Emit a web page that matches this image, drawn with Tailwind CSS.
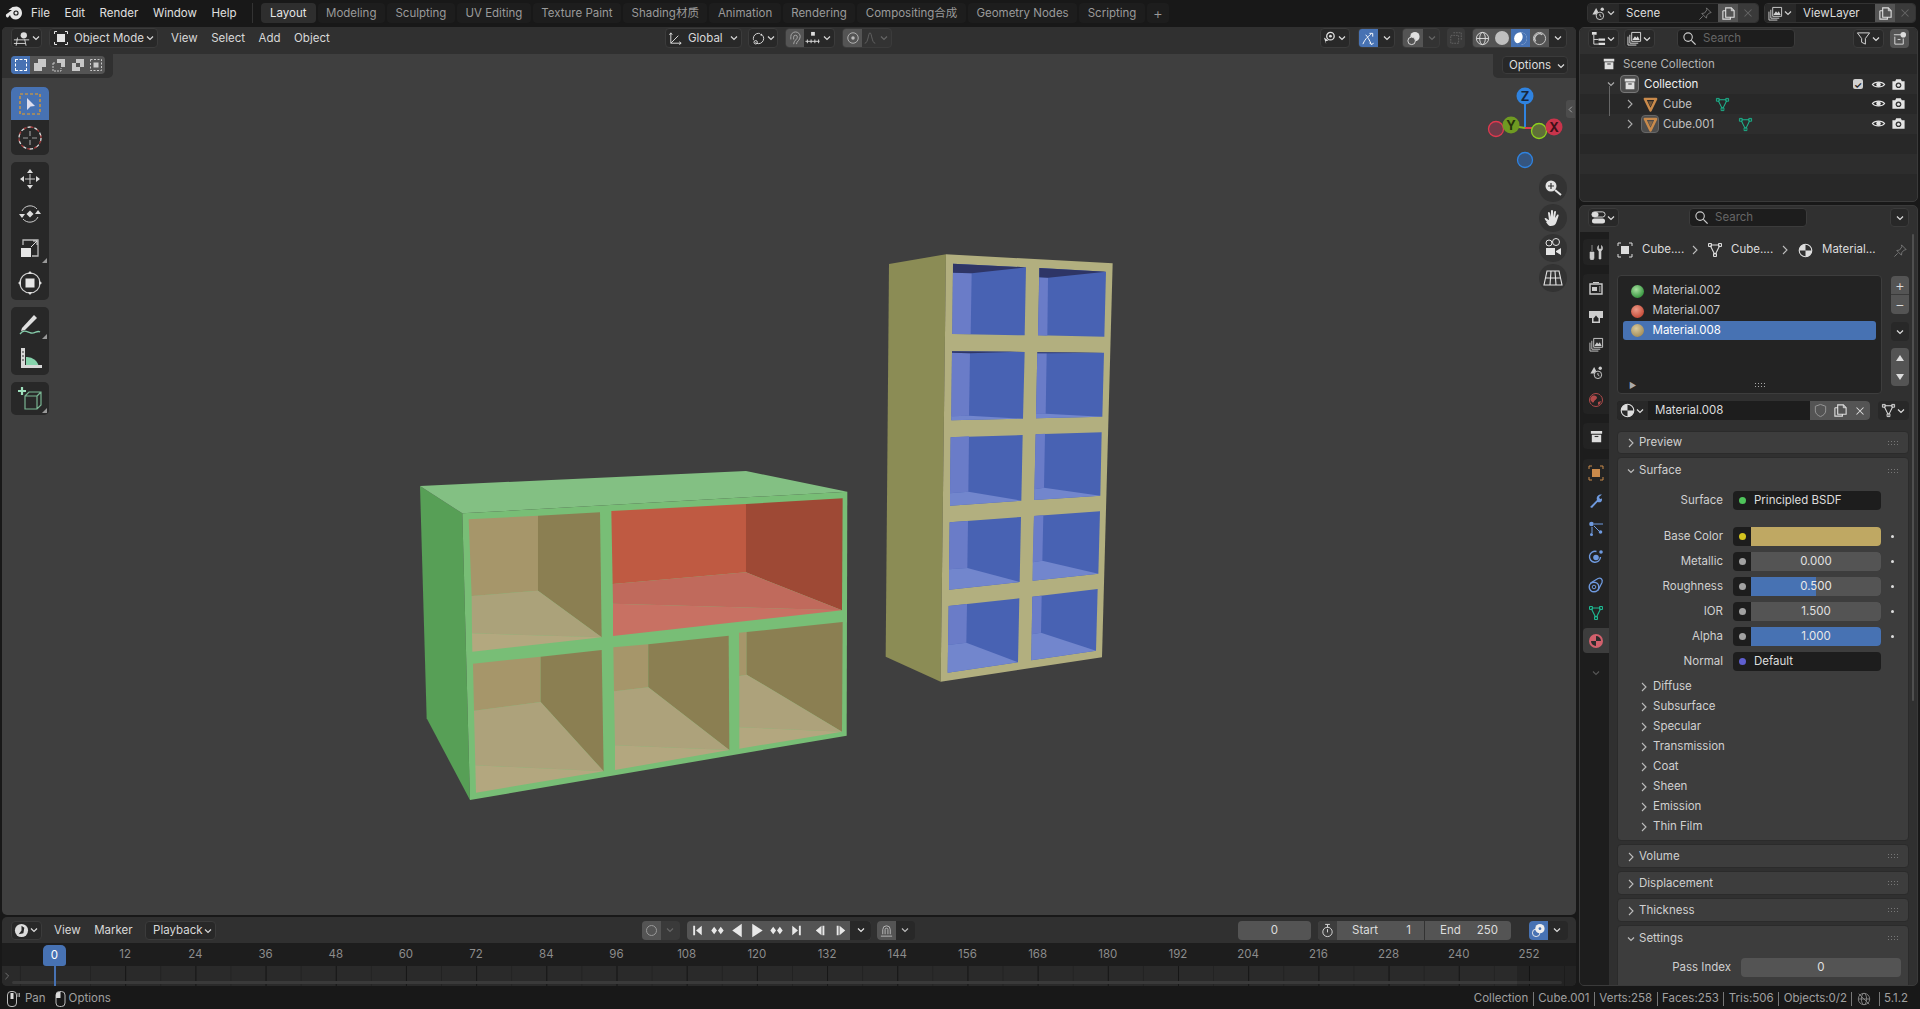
<!DOCTYPE html>
<html lang="en">
<head>
<meta charset="UTF-8">
<title>Blender</title>
<script src="https://cdn.jsdelivr.net/npm/@tailwindcss/browser@4"></script>
</head>
<body class="h-[1009px] w-[1920px] overflow-hidden bg-[#181818] text-[11.500px] leading-none whitespace-nowrap text-[#d4d4d4] font-['Inter','Noto_Sans_CJK_SC',sans-serif]">

<!-- shared icons -->
<svg width="0" height="0" class="absolute">
  <symbol id="chevd" viewBox="0 0 10 10"><path d="M2 3.500l3 3 3-3" fill="none" stroke="currentColor" stroke-width="1.200"/></symbol>
  <symbol id="chevr" viewBox="0 0 10 10"><path d="M3 1l4 4-4 4" fill="none" stroke="currentColor" stroke-width="1.100"/></symbol>
  <symbol id="tri" viewBox="0 0 16 16"><path d="M3 3H13L8 13Z" fill="none" stroke="currentColor" stroke-width="1.100"/><path d="M1.500 1.500h3v3h-3zM11.500 1.500h3v3h-3zM6.500 11.500h3v3h-3z" fill="#00000055" stroke="currentColor"/></symbol>
  <symbol id="eye" viewBox="0 0 16 16"><path d="M1.500 8C4 4.500 12 4.500 14.500 8 12 11.500 4 11.500 1.500 8Z" fill="none" stroke="currentColor" stroke-width="1.300"/><circle cx="8" cy="8" r="2.400" fill="currentColor"/></symbol>
  <symbol id="cam" viewBox="0 0 16 16"><path d="M1.500 4.500h3l1-2h5l1 2h3v9h-13z" fill="currentColor"/><circle cx="8" cy="8.800" r="3" fill="#333"/><circle cx="8" cy="8.800" r="1.600" fill="currentColor"/></symbol>
  <symbol id="box" viewBox="0 0 16 16"><path d="M2 2h12v3H2zM3 6h10v8H3z" fill="currentColor"/><path d="M6 8h4" stroke="#333" stroke-width="1.200"/></symbol>
  <symbol id="obj" viewBox="0 0 16 16"><path d="M2 2h12L8 14.500Z" fill="none" stroke="#c98a4b" stroke-width="2.600" stroke-linejoin="round"/><path d="M5.500 4.500h5L8 10z" fill="#c98a4b" opacity=".45"/></symbol>
  <symbol id="dup" viewBox="0 0 16 16"><path d="M5 2h6l3 3v7H5z M2 5h3 M2 5v9h8v-2" fill="none" stroke="currentColor" stroke-width="1.200"/><path d="M11 2v3h3" fill="none" stroke="currentColor"/></symbol>
  <symbol id="x" viewBox="0 0 16 16"><path d="M4 4l8 8M12 4l-8 8" stroke="currentColor" stroke-width="1.200"/></symbol>
  <symbol id="pin" viewBox="0 0 16 16"><path d="M9 2l5 5-2 .5-2.500 2.500-.5 3-5-5 3-.5L9.500 4zM5 11l-3.500 3.500" fill="none" stroke="currentColor"/></symbol>
  <symbol id="search" viewBox="0 0 16 16"><circle cx="6.500" cy="6.500" r="4.500" fill="none" stroke="currentColor" stroke-width="1.200"/><path d="M10 10l4.500 4.500" stroke="currentColor" stroke-width="1.400"/></symbol>
  <symbol id="mat" viewBox="0 0 16 16"><circle cx="8" cy="8" r="6.700" fill="none" stroke="currentColor" stroke-width="1.200"/><path d="M8 1.300A6.700 6.700 0 0 0 1.300 8H8zM8 8H14.700A6.700 6.700 0 0 1 8 14.700z" fill="currentColor"/></symbol>
  <symbol id="scene" viewBox="0 0 16 16"><path d="M5.500 2L9 9H1.500z" fill="currentColor"/><circle cx="12" cy="3.500" r="1.800" fill="currentColor"/><circle cx="9.500" cy="10.500" r="4" fill="#2a2a2a" stroke="currentColor"/><path d="M9.500 8.500v2l1.500 1" stroke="currentColor" fill="none"/></symbol>
  <symbol id="layers" viewBox="0 0 16 16"><path d="M5 1.500h9.500V11H5z" fill="#2a2a2a" stroke="currentColor"/><path d="M6 9l2.500-3.500L10 7.500 11.500 5.500 13.500 9.500H6z" fill="currentColor"/><path d="M3 4v9h9M1 6v9h9" fill="none" stroke="currentColor"/></symbol>
  <symbol id="grip" viewBox="0 0 11 5"><path d="M0 0h1v1H0zM3 0h1v1H3zM6 0h1v1H6zM9 0h1v1H9zM0 3h1v1H0zM3 3h1v1H3zM6 3h1v1H6zM9 3h1v1H9z" fill="currentColor"/></symbol>
  <symbol id="view3d" viewBox="0 0 20 16"><circle cx="12" cy="4.500" r="3.500" fill="currentColor"/><path d="M1 9.500h17M1 13.500h13M5 7l-1.500 9M13 9l1.500 7" stroke="currentColor" fill="none"/></symbol>
</svg>

<!-- top bar -->
<header class="flex h-[27px] items-center pb-[1px]">
  <svg class="ml-[5px] h-[16px] w-[18px] text-[#e8e8e8]" viewBox="0 0 18 16"><path d="M1 9.500l6-4.500H3.500L7.500 2l4-.5c3 .3 5.500 3 5.500 6.500s-3 6.500-6 6.500c-3.500 0-5.500-2-6-4.500L3 12.500C1.500 13 .5 11 1 9.500Z" fill="currentColor"/><circle cx="11" cy="8" r="2.600" fill="#181818"/><circle cx="11" cy="8" r="1.500" fill="currentColor"/></svg>
  <nav class="ml-[8px] flex w-[207px] gap-[14.500px] pt-[1px] text-[#e0e0e0]"><span>File</span><span>Edit</span><span>Render</span><span>Window</span><span>Help</span></nav>
  <div class="ml-[14px] h-[20px] w-px bg-[#333]"></div>
  <div class="ml-[8px] flex h-[20px] items-stretch gap-[2px] text-[#9a9a9a]">
    <span class="flex items-center rounded-[4px] bg-[#2e2e2e] px-[9px] pt-[1px] text-[#e6e6e6]">Layout</span>
    <span class="flex items-center rounded-[4px] bg-[#1d1d1d] px-[8.500px] pt-[1px]">Modeling</span>
    <span class="flex items-center rounded-[4px] bg-[#1d1d1d] px-[8.500px] pt-[1px]">Sculpting</span>
    <span class="flex items-center rounded-[4px] bg-[#1d1d1d] px-[8.500px] pt-[1px]">UV Editing</span>
    <span class="flex items-center rounded-[4px] bg-[#1d1d1d] px-[8.500px] pt-[1px]">Texture Paint</span>
    <span class="flex items-center rounded-[4px] bg-[#1d1d1d] px-[8.500px] pt-[1px]">Shading材质</span>
    <span class="flex items-center rounded-[4px] bg-[#1d1d1d] px-[8.500px] pt-[1px]">Animation</span>
    <span class="flex items-center rounded-[4px] bg-[#1d1d1d] px-[8.500px] pt-[1px]">Rendering</span>
    <span class="flex items-center rounded-[4px] bg-[#1d1d1d] px-[8.500px] pt-[1px]">Compositing合成</span>
    <span class="flex items-center rounded-[4px] bg-[#1d1d1d] px-[8.500px] pt-[1px]">Geometry Nodes</span>
    <span class="flex items-center rounded-[4px] bg-[#1d1d1d] px-[8.500px] pt-[1px]">Scripting</span>
    <span class="flex items-center rounded-[4px] bg-[#1d1d1d] px-[6px] text-[15px] font-light">+</span>
  </div>
  <div class="ml-auto mr-[4px] flex gap-[5px]">
    <div class="flex h-[20px] w-[172px] items-center overflow-hidden rounded-[4px] border border-[#333] bg-[#1d1d1d]">
      <div class="flex h-full w-[31px] items-center justify-center bg-[#282828] text-[#d0d0d0]"><svg class="h-[15px] w-[15px]"><use href="#scene"/></svg><svg class="h-[10px] w-[10px]"><use href="#chevd"/></svg></div>
      <span class="ml-[7px] pt-[1px] text-[#ddd]">Scene</span>
      <svg class="ml-auto mr-[5px] h-[15px] w-[15px] text-[#777]"><use href="#pin"/></svg>
      <div class="flex h-full w-[20px] items-center justify-center bg-[#545454] text-[#ddd]"><svg class="h-[15px] w-[15px]"><use href="#dup"/></svg></div>
      <div class="flex h-full w-[20px] items-center justify-center bg-[#3a3a3a] text-[#666]"><svg class="h-[14px] w-[14px]"><use href="#x"/></svg></div>
    </div>
    <div class="flex h-[20px] w-[152px] items-center overflow-hidden rounded-[4px] border border-[#333] bg-[#1d1d1d]">
      <div class="flex h-full w-[31px] items-center justify-center bg-[#282828] text-[#d0d0d0]"><svg class="h-[15px] w-[15px]"><use href="#layers"/></svg><svg class="h-[10px] w-[10px]"><use href="#chevd"/></svg></div>
      <span class="ml-[7px] pt-[1px] text-[#ddd]">ViewLayer</span>
      <div class="ml-auto flex h-full w-[20px] items-center justify-center bg-[#545454] text-[#ddd]"><svg class="h-[15px] w-[15px]"><use href="#dup"/></svg></div>
      <div class="flex h-full w-[20px] items-center justify-center bg-[#3a3a3a] text-[#666]"><svg class="h-[14px] w-[14px]"><use href="#x"/></svg></div>
    </div>
  </div>
</header>

<div class="flex h-[959px]">
  <!-- left column -->
  <div class="ml-[2px] flex w-[1574px] flex-col gap-[2px]">

    <!-- 3D viewport -->
    <section class="relative h-[888px] overflow-hidden rounded-[5px] bg-[#3f3f3f]">
      <svg class="absolute left-0 top-0 h-[888px] w-[1574px]" viewBox="2 27 1574 888">
        <!-- green shelf -->
        <g transform="translate(400 450) scale(.33333)">
          <polygon points="60,108 187,190 210,1050 80,805" fill="#579f56"/>
          <polygon points="60,108 1038,63 1342,125 187,190" fill="#83c083"/>
          <polygon points="187,190 1342,125 1340,857 210,1050" fill="#78be76"/>
          <polygon points="206,208 414,197 414,422 215,438" fill="#a6966a"/>
          <polygon points="414,197 600,187 605,562 414,422" fill="#8b7f52"/>
          <polygon points="215,438 414,422 605,562 216,550" fill="#aba27a"/>
          <polygon points="216,550 605,562 217,605" fill="#b3a87f"/>
          <polygon points="634,183 1038,162 1038,367 638,402" fill="#bf5a42"/>
          <polygon points="1038,162 1328,145 1326,481 1038,367" fill="#9e4935"/>
          <polygon points="638,402 1038,367 1326,481 639,461" fill="#c06a5c"/>
          <polygon points="639,461 1326,481 639,558" fill="#c87163"/>
          <polygon points="219,641 422,620 422,756 222,782" fill="#a6966a"/>
          <polygon points="422,620 605,600 611,964 422,756" fill="#8b7f52"/>
          <polygon points="222,782 422,756 611,964 226,946" fill="#ada27b"/>
          <polygon points="226,946 611,964 228,1028" fill="#b3a77f"/>
          <polygon points="640,592 745,583 745,712 642,724" fill="#a6966a"/>
          <polygon points="745,583 986,557 988,900 745,712" fill="#8b7f52"/>
          <polygon points="642,724 745,712 988,900 645,886" fill="#ada27b"/>
          <polygon points="645,886 988,900 645,960" fill="#b3a77f"/>
          <polygon points="1017,548 1040,546 1040,674 1018,678" fill="#a6966a"/>
          <polygon points="1040,546 1328,516 1326,845 1040,674" fill="#8b7f52"/>
          <polygon points="1018,678 1040,674 1326,845 1018,832" fill="#ada27b"/>
          <polygon points="1018,832 1326,845 1018,896" fill="#b3a77f"/>
        </g>
        <!-- yellow shelf -->
        <g transform="translate(870 240) scale(.33333)">
          <polygon points="57,72 228,43 212,1325 47,1250" fill="#8b8c55"/>
          <polygon points="228,43 728,70 696,1252 212,1325" fill="#b2af7f"/>
          <g fill="#4862b3">
            <polygon points="249,71 468,82 464,286 247,282"/>
            <polygon points="508,84 708,95 703,290 504,286"/>
            <polygon points="246,334 464,335 459,536 244,541"/>
            <polygon points="502,337 702,338 697,530 498,535"/>
            <polygon points="242,592 458,585 454,782 240,797"/>
            <polygon points="497,583 695,577 691,767 493,780"/>
            <polygon points="239,847 453,831 449,1026 237,1049"/>
            <polygon points="492,828 690,814 685,1001 488,1022"/>
            <polygon points="236,1098 448,1075 444,1267 233,1298"/>
            <polygon points="487,1070 683,1047 678,1232 484,1261"/>
          </g>
          <g fill="#6a7cc8">
            <polygon points="249,98 305,100 302,282 247,282"/>
            <polygon points="508,112 534,113 532,287 504,286"/>
            <polygon points="246,338 300,340 297,527 244,529"/>
            <polygon points="502,340 530,340 527,521 498,522"/>
            <polygon points="242,592 297,589 295,755 240,760"/>
            <polygon points="497,583 525,581 522,743 493,748"/>
            <polygon points="239,847 294,843 292,984 237,988"/>
            <polygon points="492,828 520,826 517,962 488,967"/>
            <polygon points="236,1098 291,1092 289,1208 234,1215"/>
            <polygon points="487,1070 515,1067 513,1178 485,1183"/>
          </g>
          <g fill="#2e3566">
            <polygon points="249,71 468,82 305,100 249,98"/>
            <polygon points="508,84 708,95 534,113 508,112"/>
            <polygon points="246,334 464,335 300,340 246,338"/>
            <polygon points="502,337 702,338 530,340 502,340"/>
          </g>
          <g fill="#7286cd">
            <polygon points="244,529 297,527 459,536 244,541"/>
            <polygon points="498,522 527,521 697,530 498,535"/>
            <polygon points="240,760 295,755 454,782 240,797"/>
            <polygon points="493,748 522,743 691,767 493,780"/>
            <polygon points="237,988 292,984 449,1026 237,1049"/>
            <polygon points="488,967 517,962 685,1001 488,1022"/>
            <polygon points="234,1215 289,1208 444,1267 233,1298"/>
            <polygon points="485,1183 513,1178 678,1232 484,1261"/>
          </g>
        </g>
        <!-- navigation gizmo -->
        <g font-family="Inter" font-size="13" font-weight="700" text-anchor="middle">
          <circle cx="1496" cy="129" r="7.500" fill="#6f3a48" stroke="#e0394f" stroke-width="1.300"/>
          <circle cx="1525" cy="160" r="7.500" fill="#35557f" stroke="#2f83e0" stroke-width="1.300"/>
          <path d="M1525 128V100" stroke="#2f83e0" stroke-width="2"/>
          <path d="M1525 128h11" stroke="#e0394f" stroke-width="2"/>
          <path d="M1525 128l-12-2" stroke="#85b81d" stroke-width="2"/>
          <circle cx="1539" cy="131" r="7.500" fill="#5f6f38" stroke="#8fd11f" stroke-width="1.300"/>
          <circle cx="1525" cy="96" r="8.500" fill="#2f83e0"/><text x="1525" y="101" fill="#17283f">Z</text>
          <circle cx="1511" cy="125" r="8.500" fill="#6f9a22"/><text x="1511" y="130" fill="#26330c">Y</text>
          <circle cx="1554" cy="127" r="8.500" fill="#c9344b"/><text x="1554" y="132" fill="#3f1019">X</text>
        </g>
        <g fill="#333333">
          <circle cx="1553" cy="188" r="14"/><circle cx="1553" cy="218" r="14"/><circle cx="1553" cy="248" r="14"/><circle cx="1553" cy="278" r="14"/>
        </g>
        <g fill="#e4e4e4" stroke="#e4e4e4">
          <circle cx="1551" cy="186" r="5.500" stroke="none"/>
          <path d="M1555 190l6 5" stroke-width="2" fill="none"/>
          <path d="M1548 186h6M1551 183v6" stroke="#333" stroke-width="1.200"/>
          <path transform="translate(0 3)" d="M1547 219c-2-2-3-4-2-4 1-.5 3 2 4 2l-1-7c0-1.500 1.500-1 2 0l1 4v-6c0-1.500 2-1.500 2 0v6l1-5c.5-1.500 2-1 2 0l-1 6 2-3c1-1 2 0 1.500 1l-2 6c-1 3-3 4-6 4-2 0-3-2-4.500-4z" stroke="none"/>
          <path d="M1546 248h9v7h-9zM1556 251l5-3v7l-5-3zM1542 251h3" stroke="none"/>
          <circle cx="1549" cy="243" r="3" fill="none"/><circle cx="1556" cy="242" r="3.500" fill="none"/>
          <path d="M1547 271h12l3 14h-18zM1545.500 278h15M1551 271l-1 14M1555 271l1 14" fill="none" stroke-width="1.100"/>
        </g>
      </svg>

      <!-- viewport header -->
      <div class="relative flex h-[27px] items-start bg-[#303030] pt-[1px] text-[#d8d8d8]">
        <div class="flex w-[663px] items-center">
          <div class="ml-[9px] flex h-[20px] w-[31px] items-center justify-center rounded-[4px] border border-[#3b3b3b] bg-[#282828] text-[#ddd]"><svg class="h-[15px] w-[18px]"><use href="#view3d"/></svg><svg class="h-[10px] w-[10px]"><use href="#chevd"/></svg></div>
          <div class="ml-[7px] flex h-[20px] w-[109px] items-center rounded-[4px] border border-[#3b3b3b] bg-[#282828]">
            <svg class="ml-[3px] h-[16px] w-[16px] text-[#e4e4e4]" viewBox="0 0 16 16"><rect x="4" y="4" width="8" height="8" fill="currentColor"/><path d="M1.500 4V1.500H4M12 1.500h2.500V4M14.500 12v2.500H12M4 14.500H1.500V12" fill="none" stroke="currentColor"/></svg>
            <span class="ml-[5px] pt-[1px]">Object Mode</span>
            <svg class="ml-auto mr-[2px] h-[10px] w-[10px]"><use href="#chevd"/></svg>
          </div>
          <nav class="ml-[13px] flex gap-[13.500px] pt-[1px]"><span>View</span><span>Select</span><span>Add</span><span>Object</span></nav>
        </div>
        <div class="flex h-[20px] w-[77px] items-center rounded-[4px] border border-[#3b3b3b] bg-[#282828]">
          <svg class="ml-[2px] h-[15px] w-[15px] text-[#ddd]" viewBox="0 0 16 16"><path d="M3 2v11h11M3 13l8-8M1.500 4L3 2l1.500 2M12 11.500l2 1.500-2 1.500" fill="none" stroke="currentColor"/></svg>
          <span class="ml-[5px] pt-[1px]">Global</span>
          <svg class="ml-auto mr-[2px] h-[10px] w-[10px]"><use href="#chevd"/></svg>
        </div>
        <div class="ml-[6px] flex h-[20px] w-[30px] items-center justify-center rounded-[4px] border border-[#3b3b3b] bg-[#282828]">
          <svg class="h-[15px] w-[15px] text-[#ddd]" viewBox="0 0 16 16"><circle cx="8" cy="8" r="5.500" fill="none" stroke="currentColor" stroke-dasharray="12 3"/><circle cx="5" cy="12" r="1.800" fill="none" stroke="currentColor"/><circle cx="11" cy="4" r="1" fill="currentColor"/></svg>
          <svg class="h-[10px] w-[10px]"><use href="#chevd"/></svg>
        </div>
        <div class="ml-[7px] flex h-[20px] w-[50px] items-center overflow-hidden rounded-[4px] border border-[#3b3b3b] bg-[#282828]">
          <div class="flex h-full w-[18px] items-center justify-center bg-[#545454] text-[#aaa]"><svg class="h-[15px] w-[15px]" viewBox="0 0 16 16"><path d="M3 9V6a5 5 0 0 1 10 0c0 4-4 5-4 8M6 9V6.500a2 2 0 0 1 4 0C10 9 6 10 6 14" fill="none" stroke="currentColor"/></svg></div>
          <svg class="h-[15px] w-[17px] text-[#ddd]" viewBox="0 0 17 16"><rect x="7" y="1" width="4" height="4" fill="currentColor"/><path d="M1 11h15M3 9v4M7 9v4M11 9v4M15 9v4" stroke="currentColor"/></svg>
          <svg class="ml-auto mr-[2px] h-[10px] w-[10px]"><use href="#chevd"/></svg>
        </div>
        <div class="ml-[7px] flex h-[20px] w-[50px] items-center overflow-hidden rounded-[4px] border border-[#3b3b3b] bg-[#333]">
          <div class="flex h-full w-[19px] items-center justify-center bg-[#545454] text-[#bbb]"><svg class="h-[14px] w-[14px]" viewBox="0 0 16 16"><circle cx="8" cy="8" r="6" fill="none" stroke="currentColor"/><circle cx="8" cy="8" r="2" fill="currentColor"/></svg></div>
          <svg class="h-[14px] w-[16px] text-[#666]" viewBox="0 0 16 16"><path d="M2 14C6 14 6 2 8 2s2 12 6 12" fill="none" stroke="currentColor"/></svg>
          <svg class="ml-auto mr-[2px] h-[10px] w-[10px] text-[#666]"><use href="#chevd"/></svg>
        </div>
        <div class="ml-[428px] flex h-[20px] w-[30px] items-center rounded-[4px] border border-[#3b3b3b] bg-[#282828] pl-[1px] text-[#ddd]">
          <svg class="h-[15px] w-[15px]" viewBox="0 0 16 16"><circle cx="9" cy="5.500" r="4" fill="none" stroke="currentColor" stroke-width="1.400"/><circle cx="9" cy="5.500" r="1.500" fill="currentColor"/><path d="M2 7l5 3-3 1 .5 3z" fill="currentColor"/></svg><svg class="h-[10px] w-[10px]"><use href="#chevd"/></svg>
        </div>
        <div class="ml-[8px] flex h-[20px] w-[37px] items-center overflow-hidden rounded-[4px] border border-[#3b3b3b] bg-[#282828] text-[#ddd]">
          <div class="flex h-full w-[19px] items-center justify-center bg-[#4772b3] text-white"><svg class="h-[15px] w-[15px]" viewBox="0 0 16 16"><path d="M2 14c3-7 6-8 9-11M9 2.500h3.500V6M5 4c2 2 4 6 6 10M9 12.500l2 2 2.500-1.500" fill="none" stroke="currentColor"/></svg></div>
          <svg class="ml-[4px] h-[10px] w-[10px]"><use href="#chevd"/></svg>
        </div>
        <div class="ml-[7px] flex h-[20px] w-[38px] items-center overflow-hidden rounded-[4px] border border-[#3b3b3b] bg-[#333] text-[#666]">
          <div class="flex h-full w-[20px] items-center justify-center bg-[#545454] text-[#e0e0e0]"><svg class="h-[15px] w-[15px]" viewBox="0 0 16 16"><circle cx="9.500" cy="6" r="5" fill="currentColor"/><circle cx="6" cy="10.500" r="4" fill="#545454" stroke="currentColor"/></svg></div>
          <svg class="ml-[4px] h-[10px] w-[10px]"><use href="#chevd"/></svg>
        </div>
        <div class="ml-[7px] flex h-[20px] w-[18px] items-center justify-center rounded-[4px] bg-[#3a3a3a] text-[#666]"><svg class="h-[14px] w-[14px]" viewBox="0 0 16 16"><path d="M5 2h9v9M2 5h9v9H2z" fill="none" stroke="currentColor" stroke-dasharray="2 1"/></svg></div>
        <div class="ml-[7px] flex h-[20px] w-[95px] items-center overflow-hidden rounded-[4px] border border-[#3b3b3b] bg-[#282828] text-[#ddd]">
          <div class="flex h-full w-[19px] items-center justify-center bg-[#545454]"><svg class="h-[15px] w-[15px]" viewBox="0 0 16 16"><circle cx="8" cy="8" r="6.500" fill="none" stroke="currentColor"/><ellipse cx="8" cy="8" rx="3" ry="6.500" fill="none" stroke="currentColor"/><path d="M1.500 8h13" stroke="currentColor"/></svg></div>
          <div class="flex h-full w-[19px] items-center justify-center bg-[#545454]"><span class="h-[14px] w-[14px] rounded-full bg-[#c0c0c0]"></span></div>
          <div class="flex h-full w-[19px] items-center justify-center bg-[#4772b3]"><svg class="h-[15px] w-[15px]" viewBox="0 0 16 16"><circle cx="8" cy="8" r="6.800" fill="#fff"/><path d="M8 1.200c3 2 3.500 8 -1 11-2 1.300-4 .8-5-.8 1 3 3.500 3.500 6 3.500a6.800 6.800 0 0 0 0-13.700z" fill="#4772b3"/></svg></div>
          <div class="flex h-full w-[19px] items-center justify-center bg-[#545454]"><svg class="h-[15px] w-[15px]" viewBox="0 0 16 16"><circle cx="8" cy="8" r="6.500" fill="none" stroke="#ccc"/><path d="M4 11A5 5 0 0 1 11 4" fill="none" stroke="#ccc" stroke-width="1.500"/></svg></div>
          <svg class="ml-[4px] h-[10px] w-[10px]"><use href="#chevd"/></svg>
        </div>
      </div>

      <!-- tool settings -->
      <div class="absolute left-0 top-[27px] flex h-[24px] w-[111px] items-start rounded-br-[5px] bg-[#303030] pl-[9px] pt-[2px]">
        <div class="flex h-[18px] overflow-hidden rounded-[4px] bg-[#545454] text-[#ddd]">
          <span class="flex w-[19px] items-center justify-center bg-[#4772b3]"><span class="h-[12px] w-[12px] border border-dashed border-white"></span></span>
          <span class="flex w-[19px] items-center justify-center"><svg class="h-[14px] w-[14px]" viewBox="0 0 14 14"><path d="M5 1h8v8H9v4H1V5h4z" fill="#c8c8c8"/></svg></span>
          <span class="flex w-[19px] items-center justify-center"><svg class="h-[14px] w-[14px]" viewBox="0 0 14 14"><path d="M5 1h8v8H9V5H5z" fill="#c8c8c8"/><path d="M1 5h3M1 5v8h8v-3" fill="none" stroke="#c8c8c8" stroke-dasharray="2 1"/></svg></span>
          <span class="flex w-[19px] items-center justify-center"><svg class="h-[14px] w-[14px]" viewBox="0 0 14 14"><path d="M5 1h8v8H9v4H1V5h4zM5 5v4h4V5z" fill="#c8c8c8" fill-rule="evenodd"/></svg></span>
          <span class="flex w-[18px] items-center justify-center"><svg class="h-[14px] w-[14px]" viewBox="0 0 14 14"><rect x="4.500" y="4.500" width="5" height="5" fill="#c8c8c8"/><rect x="1.500" y="1.500" width="11" height="11" fill="none" stroke="#c8c8c8" stroke-dasharray="2 1.500"/></svg></span>
        </div>
      </div>
      <div class="absolute right-0 top-[27px] flex h-[24px] w-[83px] items-start justify-center rounded-bl-[5px] bg-[#303030] pl-[1px] pt-[2px]">
        <div class="flex h-[18px] w-[66px] items-center rounded-[4px] border border-[#3b3b3b] bg-[#282828] pl-[6px] pt-[1px] text-[#ddd]">Options<svg class="ml-auto mr-[1px] h-[10px] w-[10px]"><use href="#chevd"/></svg></div>
      </div>
      <div class="absolute right-[1px] top-[73px] flex h-[18px] w-[9px] items-center justify-center rounded-l-[3px] bg-[#555]/60 text-[#bbb]"><svg class="h-[9px] w-[7px] rotate-180"><use href="#chevr"/></svg></div>

      <!-- toolbar -->
      <div class="absolute left-[9px] top-[60px] flex w-[38px] flex-col gap-[7px] text-[#d8d8d8]">
        <div class="flex flex-col gap-px overflow-hidden rounded-[5px] bg-[#282828]">
          <div class="flex h-[33px] items-center justify-center bg-[#4772b3]"><svg class="h-[24px] w-[24px]" viewBox="0 0 24 24"><rect x="2" y="2" width="20" height="20" fill="none" stroke="#f0a020" stroke-dasharray="3 2" stroke-width="1.200"/><path d="M9 6v12l3.500-3.500 4.500-.5z" fill="#dde"/></svg></div>
          <div class="flex h-[34px] items-center justify-center"><svg class="h-[26px] w-[26px]" viewBox="0 0 26 26"><circle cx="13" cy="13" r="11" fill="none" stroke="#ddd" stroke-width="1.300" stroke-dasharray="4 3"/><circle cx="13" cy="13" r="11" fill="none" stroke="#a03a3a" stroke-width="1.300" stroke-dasharray="3 4" stroke-dashoffset="4"/><path d="M13 6v5M13 15v5M6 13h5M15 13h5" stroke="#999" stroke-width="1.200"/></svg></div>
        </div>
        <div class="flex flex-col gap-px overflow-hidden rounded-[5px] bg-[#282828]">
          <div class="flex h-[33.750px] items-center justify-center"><svg class="h-[24px] w-[24px]" viewBox="0 0 24 24"><path d="M12 7v10M7 12h10" stroke="#ccc"/><path d="M12 2l3 4H9zM12 22l-3-4h6zM2 12l4-3v6zM22 12l-4 3V9z" fill="#ddd"/></svg></div>
          <div class="flex h-[33.750px] items-center justify-center"><svg class="h-[24px] w-[24px]" viewBox="0 0 24 24"><path d="M4 9a9 9 0 0 1 15-2M20 15a9 9 0 0 1-15 2" fill="none" stroke="#ccc"/><path d="M1 12h6l-3 4zM17 12h6l-3-4z" fill="#ddd"/><path d="M12 8.500l3.500 3.500-3.500 3.500L8.500 12z" fill="#ddd"/></svg></div>
          <div class="relative flex h-[33.750px] items-center justify-center"><svg class="h-[22px] w-[22px]" viewBox="0 0 22 22"><path d="M4 8V3h15v16h-6" fill="none" stroke="#bbb" stroke-width="1.300"/><rect x="2" y="11" width="10" height="9" fill="#e6e6e6"/><path d="M12 10l6-6M14 4h4v4" fill="none" stroke="#ddd"/></svg><span class="absolute bottom-[2px] right-[2px] h-0 w-0 border-b-[5px] border-l-[5px] border-b-[#999] border-l-transparent"></span></div>
          <div class="flex h-[33.750px] items-center justify-center"><svg class="h-[26px] w-[26px]" viewBox="0 0 26 26"><circle cx="13" cy="13" r="10" fill="none" stroke="#ccc" stroke-width="1.200"/><rect x="8.500" y="8.500" width="9" height="9" fill="#e6e6e6"/><path d="M13 1l2.500 3h-5zM13 25l-2.500-3h5zM1 13l3-2.500v5zM25 13l-3 2.500v-5z" fill="#ddd"/></svg></div>
        </div>
        <div class="flex flex-col gap-px overflow-hidden rounded-[5px] bg-[#282828]">
          <div class="relative flex h-[33.500px] items-center justify-center"><svg class="h-[26px] w-[26px]" viewBox="0 0 26 26"><path d="M5 17L17 4l3 3L8 19l-4 1z" fill="#e0e0e0"/><path d="M3 23c4-5 7-2 11-1 4 1 6-3 9-1" fill="none" stroke="#86cdab" stroke-width="1.300"/></svg><span class="absolute bottom-[2px] right-[2px] h-0 w-0 border-b-[5px] border-l-[5px] border-b-[#999] border-l-transparent"></span></div>
          <div class="flex h-[33.500px] items-center justify-center"><svg class="h-[26px] w-[26px]" viewBox="0 0 26 26"><path d="M9 12a12 12 0 0 1 13 11H9z" fill="#86d3ac"/><path d="M4 3h4v17h17v3H4z" fill="#d8d8d8"/><path d="M5 7h2M5 11h2M5 15h2" stroke="#333"/></svg></div>
        </div>
        <div class="relative flex h-[33px] items-center justify-center rounded-[5px] bg-[#282828]"><svg class="h-[28px] w-[28px]" viewBox="0 0 28 28"><path d="M9 11l4-4h12v13l-4 4H9zM9 11h12v13M21 11l4-4" fill="none" stroke="#79b592" stroke-width="1.200"/><path d="M6 2v8M2 6h8" stroke="#9fe0bd" stroke-width="2.200"/></svg><span class="absolute bottom-[2px] right-[2px] h-0 w-0 border-b-[5px] border-l-[5px] border-b-[#999] border-l-transparent"></span></div>
      </div>
    </section>

    <!-- timeline -->
    <section class="relative h-[69px] overflow-hidden rounded-[5px] bg-[#303030]">
      <div class="flex h-[26px] items-center text-[#d8d8d8]">
        <div class="flex w-[640px] items-center">
          <div class="ml-[9px] flex h-[19px] w-[31px] items-center justify-center rounded-[4px] border border-[#3b3b3b] bg-[#282828] text-[#ddd]"><svg class="h-[15px] w-[15px]" viewBox="0 0 16 16"><circle cx="8" cy="8" r="7" fill="currentColor"/><path d="M8 3v5l-3 4 5-1 1-6z" fill="#282828"/></svg><svg class="h-[10px] w-[10px]"><use href="#chevd"/></svg></div>
          <nav class="ml-[12px] flex gap-[13.500px] pt-[1px]"><span>View</span><span>Marker</span></nav>
          <div class="ml-[12.500px] flex h-[19px] w-[71px] items-center rounded-[4px] border border-[#3b3b3b] bg-[#282828] pl-[7px] pt-[1px]">Playback<svg class="ml-auto mr-[2px] h-[10px] w-[10px]"><use href="#chevd"/></svg></div>
        </div>
        <div class="flex h-[19px] w-[38px] items-center overflow-hidden rounded-[4px] bg-[#3a3a3a] text-[#888]"><span class="flex h-full w-[19px] items-center justify-center bg-[#545454]"><span class="h-[11px] w-[11px] rounded-full border border-[#999]"></span></span><svg class="ml-[4px] h-[10px] w-[10px] text-[#666]"><use href="#chevd"/></svg></div>
        <div class="ml-[7px] flex h-[19px] w-[184px] items-center overflow-hidden rounded-[4px] bg-[#545454] text-[#e8e8e8]">
          <svg class="h-[19px] w-[20px]" viewBox="0 0 20 20"><path d="M6 5h2v10H6zM15 5v10l-6-5z" fill="currentColor"/></svg>
          <svg class="h-[19px] w-[20px]" viewBox="0 0 20 20"><path d="M7 6l3 4-3 4-3-4zM14 6l3 4-3 4-3-4z" fill="currentColor"/></svg>
          <svg class="h-[19px] w-[20px]" viewBox="0 0 20 20"><path d="M15 3v14L5 10z" fill="currentColor"/></svg>
          <svg class="h-[19px] w-[20px]" viewBox="0 0 20 20"><path d="M5 3v14l11-7z" fill="currentColor"/></svg>
          <svg class="h-[19px] w-[20px]" viewBox="0 0 20 20"><path d="M6 6l3 4-3 4-3-4zM13 6l3 4-3 4-3-4z" fill="currentColor"/></svg>
          <svg class="h-[19px] w-[20px]" viewBox="0 0 20 20"><path d="M12 5h2v10h-2zM5 5v10l6-5z" fill="currentColor"/></svg>
          <span class="w-[5px]"></span>
          <svg class="h-[19px] w-[19px]" viewBox="0 0 20 20"><path d="M11 5h2v10h-2zM10 5v10l-6-5z" fill="currentColor"/></svg>
          <svg class="h-[19px] w-[19px]" viewBox="0 0 20 20"><path d="M6 5h2v10H6zM9 5v10l6-5z" fill="currentColor"/></svg>
          <span class="flex h-full flex-1 items-center justify-center bg-[#282828]"><svg class="h-[10px] w-[10px]"><use href="#chevd"/></svg></span>
        </div>
        <div class="ml-[6px] flex h-[19px] w-[38px] items-center overflow-hidden rounded-[4px] bg-[#282828] text-[#bbb]"><span class="flex h-full w-[19px] items-center justify-center bg-[#545454]"><svg class="h-[15px] w-[15px]" viewBox="0 0 16 16"><path d="M2 14h12M4 12V7a4 4 0 0 1 8 0v5M6.500 12V7a1.500 1.500 0 0 1 3 0v5" fill="none" stroke="currentColor"/></svg></span><svg class="ml-[4px] h-[10px] w-[10px]"><use href="#chevd"/></svg></div>
        <div class="ml-[323px] flex h-[19px] w-[73px] items-center justify-center rounded-[4px] bg-[#545454] pt-[1px] text-[#ddd]">0</div>
        <div class="ml-[7px] flex h-[19px] w-[193px] items-center overflow-hidden rounded-[4px] bg-[#545454] text-[#ddd]">
          <span class="flex h-full w-[19px] items-center justify-center bg-[#3d3d3d]"><svg class="h-[15px] w-[15px]" viewBox="0 0 16 16"><circle cx="8" cy="9.500" r="5" fill="none" stroke="currentColor"/><path d="M5.500 1.500h5M8 2v3M8 6.500V10" stroke="currentColor"/></svg></span>
          <span class="flex h-full w-[88px] items-center justify-between border-r border-[#333] pl-[15px] pr-[13px] pt-[1px]"><span>Start</span><span>1</span></span>
          <span class="flex h-full flex-1 items-center justify-between pl-[15px] pr-[13px] pt-[1px]"><span>End</span><span>250</span></span>
        </div>
        <div class="ml-[18px] flex h-[19px] w-[39px] items-center overflow-hidden rounded-[4px] bg-[#282828] text-[#ddd]"><span class="flex h-full w-[19px] items-center justify-center bg-[#4772b3]"><svg class="h-[15px] w-[15px]" viewBox="0 0 16 16"><circle cx="9.500" cy="6" r="5" fill="#eee"/><circle cx="9.500" cy="6" r="1.500" fill="#4772b3"/><circle cx="5.500" cy="10.500" r="4" fill="none" stroke="#eee"/></svg></span><svg class="ml-[4px] h-[10px] w-[10px]"><use href="#chevd"/></svg></div>
      </div>
      <div class="flex h-[23px] items-center bg-[#1d1d1d] pl-[17.900px] pt-[1px] text-[#8c8c8c]">
        <span class="w-[70.200px] text-center">&nbsp;</span><span class="w-[70.200px] text-center">12</span><span class="w-[70.200px] text-center">24</span><span class="w-[70.200px] text-center">36</span><span class="w-[70.200px] text-center">48</span><span class="w-[70.200px] text-center">60</span><span class="w-[70.200px] text-center">72</span><span class="w-[70.200px] text-center">84</span><span class="w-[70.200px] text-center">96</span><span class="w-[70.200px] text-center">108</span><span class="w-[70.200px] text-center">120</span><span class="w-[70.200px] text-center">132</span><span class="w-[70.200px] text-center">144</span><span class="w-[70.200px] text-center">156</span><span class="w-[70.200px] text-center">168</span><span class="w-[70.200px] text-center">180</span><span class="w-[70.200px] text-center">192</span><span class="w-[70.200px] text-center">204</span><span class="w-[70.200px] text-center">216</span><span class="w-[70.200px] text-center">228</span><span class="w-[70.200px] text-center">240</span><span class="w-[70.200px] text-center">252</span>
      </div>
      <div class="relative h-[20px] bg-[#2a2a2a] bg-[linear-gradient(90deg,#161616_1px,transparent_1px),linear-gradient(90deg,#222222_1px,transparent_1px)] bg-size-[70.200px_100%,35.100px_100%] bg-position-[53px_0,17.900px_0]">
        <div class="absolute bottom-[2px] left-[10px] h-[3px] w-[1550px] rounded-full bg-[#3a3a3a]"></div>
        <div class="absolute bottom-0 right-0 top-0 w-[59px] bg-[#000]/15"></div>
        <svg class="absolute left-[1px] top-[5px] h-[10px] w-[8px] text-[#777]"><use href="#chevr"/></svg>
      </div>
      <!-- playhead -->
      <div class="absolute left-[41px] top-[28px] flex h-[21px] w-[23px] items-center justify-center rounded-t-[5px] rounded-b-[3px] bg-[#4772b3] text-white">0</div>
      <div class="absolute left-[52px] top-[49px] h-[20px] w-[2px] bg-[#4772b3]"></div>
    </section>
  </div>

  <!-- right column -->
  <div class="ml-[3px] flex w-[339px] flex-col gap-[3px]">
    <!-- outliner -->
    <section class="h-[175px] overflow-hidden rounded-[5px] border border-[#3a3a3a] bg-[#282828]">
      <div class="flex h-[26px] items-start bg-[#303030] pt-[1px] text-[#ddd]">
        <div class="ml-[8px] flex h-[19px] w-[31px] items-center justify-center rounded-[4px] border border-[#3b3b3b] bg-[#282828]"><svg class="h-[15px] w-[15px]" viewBox="0 0 16 16"><path d="M1 1h5v3H1zM8 8h7v2.500H8zM8 12.500h7V15H8z" fill="currentColor"/><path d="M3 4v10h5M3 9h5" fill="none" stroke="currentColor"/></svg><svg class="h-[10px] w-[10px]"><use href="#chevd"/></svg></div>
        <div class="ml-[5px] flex h-[19px] w-[31px] items-center justify-center rounded-[4px] border border-[#3b3b3b] bg-[#282828]"><svg class="h-[15px] w-[15px]"><use href="#layers"/></svg><svg class="h-[10px] w-[10px]"><use href="#chevd"/></svg></div>
        <div class="ml-[22px] flex h-[19px] w-[118px] items-center rounded-[4px] border border-[#3b3b3b] bg-[#1d1d1d] pl-[4px] text-[#666]"><svg class="h-[15px] w-[15px] text-[#ccc]"><use href="#search"/></svg><span class="ml-[6px] pt-[1px]">Search</span></div>
        <div class="ml-auto flex h-[19px] w-[31px] items-center justify-center rounded-[4px] border border-[#3b3b3b] bg-[#282828]"><svg class="h-[15px] w-[15px]" viewBox="0 0 16 16"><path d="M1.500 2h13L10 8v6l-4-2V8z" fill="none" stroke="currentColor"/></svg><svg class="h-[10px] w-[10px]"><use href="#chevd"/></svg></div>
        <div class="ml-[6px] mr-[8px] flex h-[19px] w-[19px] items-center justify-center rounded-[4px] bg-[#545454]"><svg class="h-[15px] w-[15px]" viewBox="0 0 16 16"><path d="M2 4h8M3 6v8h9V8M6 9h3" fill="none" stroke="currentColor"/><circle cx="12" cy="4" r="3" fill="currentColor"/></svg></div>
      </div>
      <div class="relative text-[#d8d8d8]">
        <div class="flex h-[20px] items-center pl-[22px] text-[#b4b4b4]"><svg class="h-[14px] w-[14px] text-[#e0e0e0]"><use href="#box"/></svg><span class="ml-[7px] pt-[1px]">Scene Collection</span></div>
        <div class="flex h-[20px] items-center bg-[#2d2d2d] pl-[26px]"><svg class="h-[10px] w-[10px] text-[#aaa]"><use href="#chevd"/></svg><span class="ml-[4px] flex h-[18px] w-[19px] items-center justify-center rounded-[4px] border border-[#777] bg-[#4d4d4d]"><svg class="h-[14px] w-[14px] text-[#e0e0e0]"><use href="#box"/></svg></span><span class="ml-[5px] pt-[1px] text-[#f0f0f0]">Collection</span>
          <span class="ml-auto flex h-[10px] w-[10px] items-center justify-center rounded-[2px] bg-[#d0d0d0] text-[9px] font-bold text-[#222]">✓</span>
          <svg class="ml-[8px] h-[15px] w-[15px] text-[#e4e4e4]"><use href="#eye"/></svg><svg class="ml-[5px] mr-[11px] h-[15px] w-[15px] text-[#e4e4e4]"><use href="#cam"/></svg></div>
        <div class="flex h-[20px] items-center pl-[45px] text-[#c0c0c0]"><svg class="h-[10px] w-[10px] text-[#aaa]"><use href="#chevr"/></svg><span class="ml-[6px] flex h-[18px] w-[18px] items-center justify-center"><svg class="h-[15px] w-[15px]"><use href="#obj"/></svg></span><span class="ml-[4px] pt-[1px]">Cube</span><svg class="ml-[23px] h-[15px] w-[15px] text-[#1fb58f]"><use href="#tri"/></svg>
          <svg class="ml-auto -mt-[1px] h-[15px] w-[15px] text-[#e4e4e4]"><use href="#eye"/></svg><svg class="ml-[5px] mr-[11px] -mt-[1px] h-[15px] w-[15px] text-[#e4e4e4]"><use href="#cam"/></svg></div>
        <div class="flex h-[20px] items-center bg-[#2d2d2d] pl-[45px] text-[#c0c0c0]"><svg class="h-[10px] w-[10px] text-[#aaa]"><use href="#chevr"/></svg><span class="ml-[6px] flex h-[18px] w-[18px] items-center justify-center rounded-[4px] border border-[#666] bg-[#4d4d4d]"><svg class="h-[15px] w-[15px]"><use href="#obj"/></svg></span><span class="ml-[4px] pt-[1px]">Cube.001</span><svg class="ml-[24px] h-[15px] w-[15px] text-[#1fb58f]"><use href="#tri"/></svg>
          <svg class="ml-auto -mt-[1px] h-[15px] w-[15px] text-[#e4e4e4]"><use href="#eye"/></svg><svg class="ml-[5px] mr-[11px] -mt-[1px] h-[15px] w-[15px] text-[#e4e4e4]"><use href="#cam"/></svg></div>
        <div class="h-[20px]"></div>
        <div class="h-[20px] bg-[#2d2d2d]"></div>
        <div class="h-[20px]"></div>
        <div class="absolute left-[29px] top-[32px] h-[30px] w-px bg-[#666]"></div>
      </div>
    </section>

    <!-- properties -->
    <section class="flex h-[781px] flex-col overflow-hidden rounded-[5px] border border-[#3a3a3a] bg-[#303030]">
      <div class="flex h-[26px] shrink-0 items-start pt-[2px] text-[#ddd]">
        <div class="ml-[8px] flex h-[19px] w-[31px] items-center justify-center rounded-[4px] border border-[#3b3b3b] bg-[#282828]"><svg class="h-[15px] w-[15px]" viewBox="0 0 16 16"><rect x="1" y="2" width="14" height="5.500" rx="2.700" fill="none" stroke="currentColor"/><rect x="1" y="2" width="7" height="5.500" rx="2.700" fill="currentColor"/><rect x="1" y="9" width="14" height="5.500" rx="2.700" fill="currentColor"/></svg><svg class="h-[10px] w-[10px]"><use href="#chevd"/></svg></div>
        <div class="ml-[70px] flex h-[19px] w-[118px] items-center rounded-[4px] border border-[#3b3b3b] bg-[#1d1d1d] pl-[4px] text-[#666]"><svg class="h-[15px] w-[15px] text-[#ccc]"><use href="#search"/></svg><span class="ml-[6px]">Search</span></div>
        <div class="ml-auto mr-[8px] flex h-[19px] w-[19px] items-center justify-center rounded-[4px] border border-[#3b3b3b] bg-[#282828]"><svg class="h-[10px] w-[10px]"><use href="#chevd"/></svg></div>
      </div>
      <div class="flex min-h-0 flex-1">
        <!-- tabs -->
        <div class="flex w-[29px] shrink-0 flex-col items-end bg-[#1d1d1d] pt-[7px]">
          <div class="flex h-[26px] w-[26px] items-center justify-center rounded-l-[4px] bg-[#232323]"><svg class="h-[16px] w-[16px] text-[#ccc]" viewBox="0 0 16 16"><path d="M4 1v6M2 8h4v6a2 2 0 0 1-4 0zM11 7c-2-1-2-4-.5-5.500V5h3V1.500C15 3 15 6 13 7v8h-2z" fill="currentColor" stroke="currentColor" stroke-width=".6"/></svg></div>
          <div class="mt-[9px] flex w-[26px] flex-col rounded-l-[4px] bg-[#232323] text-[#ccc]">
            <div class="flex h-[28px] items-center justify-center"><svg class="h-[16px] w-[16px]" viewBox="0 0 16 16"><path d="M2 4h12v10H2z" fill="none" stroke="currentColor" stroke-width="1.400"/><path d="M4 7h5v4H4z" fill="currentColor"/><path d="M5 2.500h6" stroke="currentColor"/><path d="M11 7h1.500M11 9h1.500M11 11h1.500" stroke="currentColor"/></svg></div>
            <div class="flex h-[28px] items-center justify-center"><svg class="h-[16px] w-[16px]" viewBox="0 0 16 16"><path d="M1 3h14v7H1zM4 10h8v5H4z" fill="currentColor"/><path d="M5.500 10.500l2.500-3 2.500 3v3h-5z" fill="#232323"/></svg></div>
            <div class="flex h-[28px] items-center justify-center"><svg class="h-[15px] w-[15px]"><use href="#layers"/></svg></div>
            <div class="flex h-[28px] items-center justify-center"><svg class="h-[15px] w-[15px]"><use href="#scene"/></svg></div>
            <div class="flex h-[28px] items-center justify-center"><svg class="h-[16px] w-[16px] text-[#b04a4a]" viewBox="0 0 16 16"><circle cx="8" cy="8" r="6.500" fill="none" stroke="currentColor"/><path d="M4 4c3-1 5 0 5 2s-3 2-3 4-2 0-3-1-1-3 1-5zM10 10l3-1-1 3-2 1z" fill="currentColor"/><path d="M13 2L3 14" stroke="#232323"/></svg></div>
          </div>
          <div class="mt-[9px] flex h-[26px] w-[26px] items-center justify-center rounded-l-[4px] bg-[#232323]"><svg class="h-[15px] w-[15px] text-[#ddd]"><use href="#box"/></svg></div>
          <div class="mt-[10px] flex w-[26px] flex-col items-center rounded-l-[4px] bg-[#232323]">
            <div class="flex h-[28px] w-full items-center justify-center"><svg class="h-[16px] w-[16px]" viewBox="0 0 16 16"><rect x="4" y="4" width="8" height="8" fill="#c98a4b"/><path d="M1 4V1h3M12 1h3v3M15 12v3h-3M4 15H1v-3" fill="none" stroke="#c98a4b"/></svg></div>
            <div class="flex h-[28px] w-full items-center justify-center"><svg class="h-[16px] w-[16px] text-[#6f9adf]" viewBox="0 0 16 16"><path d="M2 14l7-7c-1-3 1-6 5-5.500L11 4l1 2 2-.5C14.500 9 12 10 9.500 9L4 15z" fill="currentColor"/></svg></div>
            <div class="flex h-[28px] w-full items-center justify-center"><svg class="h-[16px] w-[16px] text-[#6f9adf]" viewBox="0 0 16 16"><circle cx="3.500" cy="3" r="2.300" fill="currentColor"/><circle cx="3.500" cy="13.500" r="1.500" fill="currentColor"/><circle cx="12.500" cy="11" r="1.800" fill="currentColor"/><path d="M6 3h9M4 6v6M6 5l5 5" stroke="currentColor"/></svg></div>
            <div class="flex h-[28px] w-full items-center justify-center"><svg class="h-[16px] w-[16px] text-[#6f9adf]" viewBox="0 0 16 16"><path d="M12.500 8a5.500 5.500 0 1 1-4-5.500M11.500 12.500" fill="none" stroke="currentColor" stroke-width="1.400"/><circle cx="8" cy="8.500" r="2.800" fill="currentColor"/><circle cx="13" cy="3" r="1.800" fill="currentColor"/></svg></div>
            <div class="flex h-[28px] w-full items-center justify-center"><svg class="h-[16px] w-[16px] text-[#6f9adf]" viewBox="0 0 16 16"><circle cx="6" cy="10" r="4.800" fill="none" stroke="currentColor" stroke-width="1.400"/><circle cx="6" cy="10" r="1.800" fill="none" stroke="currentColor"/><path d="M2.500 6L10 1.500c3-1 5 1 4 4L10 13.500" fill="none" stroke="currentColor" stroke-width="1.300"/></svg></div>
            <div class="flex h-[28px] w-full items-center justify-center"><svg class="h-[16px] w-[16px] text-[#1fb58f]"><use href="#tri"/></svg></div>
            <div class="mt-[1px] flex h-[25px] w-[26px] items-center justify-center rounded-l-[4px] bg-[#3d3d3d]"><svg class="h-[16px] w-[16px]" viewBox="0 0 16 16"><circle cx="8" cy="8" r="7" fill="#d1606c"/><path d="M8 3v5h5a5 5 0 0 0-5-5zM8 8H3a5 5 0 0 0 5 5z" fill="#2b2b2b"/></svg></div>
          </div>
          <div class="flex h-[40px] w-[26px] items-center justify-center text-[#555]"><svg class="h-[10px] w-[10px]"><use href="#chevd"/></svg></div>
        </div>

        <!-- content -->
        <div class="relative min-w-0 flex-1 pl-[8px] pr-[8px] text-[#d0d0d0]">
          <div class="absolute right-[3px] top-[2px] h-[467px] w-[2px] rounded-full bg-[#4f4f4f]"></div>
          <div class="flex h-[34px] items-center pt-[2px] text-[#ddd]">
            <svg class="h-[16px] w-[16px]" viewBox="0 0 16 16"><rect x="4" y="4" width="8" height="8" fill="#ddd"/><path d="M1 4V1h3M12 1h3v3M15 12v3h-3M4 15H1v-3" fill="none" stroke="#ddd"/></svg>
            <span class="ml-[9px] w-[40px]">Cube....</span>
            <svg class="ml-[8px] h-[10px] w-[10px] text-[#bbb]"><use href="#chevr"/></svg>
            <svg class="ml-[7px] h-[16px] w-[16px]"><use href="#tri"/></svg>
            <span class="ml-[8px] w-[40px]">Cube....</span>
            <svg class="ml-[9px] h-[10px] w-[10px] text-[#bbb]"><use href="#chevr"/></svg>
            <svg class="ml-[8px] h-[15px] w-[15px]"><use href="#mat"/></svg>
            <span class="ml-[9px]">Material...</span>
            <svg class="ml-auto mr-[1px] h-[15px] w-[15px] text-[#777]"><use href="#pin"/></svg>
          </div>

          <!-- material slots -->
          <div class="mt-[9px] flex gap-[9px]">
            <div class="flex h-[119px] w-[265px] flex-col rounded-[4px] border border-[#3d3d3d] bg-[#232323] px-[5px] pt-[5px] text-[#c8c8c8]">
              <div class="flex h-[20px] items-center pl-[8px]"><span class="h-[13px] w-[13px] rounded-full bg-[radial-gradient(circle_at_40%_35%,#a8e0a0,#3c9a44_70%,#1d5020)]"></span><span class="ml-[8.500px]">Material.002</span></div>
              <div class="flex h-[20px] items-center pl-[8px]"><span class="h-[13px] w-[13px] rounded-full bg-[radial-gradient(circle_at_40%_35%,#eb9a88,#c9503d_70%,#6a2218)]"></span><span class="ml-[8.500px]">Material.007</span></div>
              <div class="flex h-[19px] items-center rounded-[3px] bg-[#4772b3] pl-[8px] text-white"><span class="h-[13px] w-[13px] rounded-full bg-[radial-gradient(circle_at_40%_35%,#d9c99b,#a8925e_70%,#4d4020)]"></span><span class="ml-[8.500px]">Material.008</span></div>
              <div class="mt-auto flex h-[16px] items-center justify-between pl-[6px] pr-[110px] text-[#aaa]"><span class="text-[8px]">▶</span><svg class="h-[5px] w-[11px]"><use href="#grip"/></svg></div>
            </div>
            <div class="flex w-[18px] flex-col text-[#ddd]">
              <div class="mt-[1px] overflow-hidden rounded-[4px] bg-[#545454]">
                <div class="flex h-[19px] items-center justify-center border-b border-[#3a3a3a] text-[15px] font-light">+</div>
                <div class="flex h-[19px] items-center justify-center text-[15px] font-light">−</div>
              </div>
              <div class="mt-[8px] flex h-[19px] items-center justify-center rounded-[4px] bg-[#282828]"><svg class="h-[10px] w-[10px]"><use href="#chevd"/></svg></div>
              <div class="mt-[7px] overflow-hidden rounded-[4px] bg-[#545454]">
                <div class="flex h-[19px] items-center justify-center"><span class="h-0 w-0 border-x-[4px] border-b-[6px] border-x-transparent border-b-[#ddd]"></span></div>
                <div class="flex h-[19px] items-center justify-center"><span class="h-0 w-0 border-x-[4px] border-t-[6px] border-x-transparent border-t-[#ddd]"></span></div>
              </div>
            </div>
          </div>

          <!-- material name -->
          <div class="mt-[7px] flex justify-between">
            <div class="flex h-[19px] w-[253px] items-center overflow-hidden rounded-[4px] bg-[#1d1d1d]">
              <div class="flex h-full w-[31px] items-center justify-center bg-[#282828] text-[#ddd]"><svg class="h-[15px] w-[15px]"><use href="#mat"/></svg><svg class="h-[10px] w-[10px]"><use href="#chevd"/></svg></div>
              <span class="ml-[7px] text-[#ddd]">Material.008</span>
              <div class="ml-auto flex h-full w-[20px] items-center justify-center bg-[#545454] text-[#999]"><svg class="h-[15px] w-[15px]" viewBox="0 0 16 16"><path d="M8 1.500l5.500 2v5c0 3-3 5-5.500 6-2.500-1-5.500-3-5.500-6v-5z" fill="none" stroke="currentColor"/></svg></div>
              <div class="flex h-full w-[20px] items-center justify-center bg-[#545454] text-[#ddd]"><svg class="h-[15px] w-[15px]"><use href="#dup"/></svg></div>
              <div class="flex h-full w-[20px] items-center justify-center bg-[#545454] text-[#ddd]"><svg class="h-[14px] w-[14px]"><use href="#x"/></svg></div>
            </div>
            <div class="flex h-[19px] w-[31px] items-center justify-center rounded-[4px] bg-[#282828] text-[#ddd]"><svg class="h-[15px] w-[15px]"><use href="#tri"/></svg><svg class="h-[10px] w-[10px]"><use href="#chevd"/></svg></div>
          </div>

          <!-- panels -->
          <div class="mt-[11px] flex h-[23px] items-center rounded-[4px] border border-[#2b2b2b] bg-[#3d3d3d] pl-[8px] pt-[1px]"><svg class="h-[10px] w-[10px] text-[#bbb]"><use href="#chevr"/></svg><span class="ml-[3px]">Preview</span><svg class="ml-auto mr-[9px] h-[5px] w-[11px] text-[#777]"><use href="#grip"/></svg></div>
          <div class="mt-[3px] h-[384px] rounded-[4px] border border-[#2b2b2b] bg-[#3d3d3d]">
            <div class="flex h-[24px] items-center pl-[8px] pt-[2px]"><svg class="h-[10px] w-[10px] text-[#bbb]"><use href="#chevd"/></svg><span class="ml-[3px]">Surface</span><svg class="ml-auto mr-[9px] h-[5px] w-[11px] text-[#777]"><use href="#grip"/></svg></div>
            <div class="mt-[9px] flex h-[19px] items-center"><span class="w-[105px] text-right">Surface</span><div class="ml-[10px] flex h-full w-[148px] items-center rounded-[4px] bg-[#1d1d1d] text-[#ddd]"><span class="ml-[6px] h-[7px] w-[7px] rounded-full bg-[#4fc45b]"></span><span class="ml-[8px]">Principled BSDF</span></div></div>
            <div class="mt-[17px] flex h-[19px] items-center"><span class="w-[105px] text-right">Base Color</span><div class="ml-[10px] flex h-full w-[148px] overflow-hidden rounded-[4px] bg-[#1d1d1d]"><span class="flex w-[18px] items-center justify-center"><span class="h-[7px] w-[7px] rounded-full bg-[#d4c41f]"></span></span><span class="flex-1 bg-[#bfa863]"></span></div><span class="ml-[10px] h-[3px] w-[3px] rounded-full bg-[#ddd]"></span></div>
            <div class="mt-[6px] flex h-[19px] items-center"><span class="w-[105px] text-right">Metallic</span><div class="ml-[10px] flex h-full w-[148px] overflow-hidden rounded-[4px] bg-[#1d1d1d]"><span class="flex w-[18px] items-center justify-center"><span class="h-[7px] w-[7px] rounded-full bg-[#a1a1a1]"></span></span><span class="flex flex-1 items-center justify-center bg-[#545454] text-[#e0e0e0]">0.000</span></div><span class="ml-[10px] h-[3px] w-[3px] rounded-full bg-[#ddd]"></span></div>
            <div class="mt-[6px] flex h-[19px] items-center"><span class="w-[105px] text-right">Roughness</span><div class="ml-[10px] flex h-full w-[148px] overflow-hidden rounded-[4px] bg-[#1d1d1d]"><span class="flex w-[18px] items-center justify-center"><span class="h-[7px] w-[7px] rounded-full bg-[#a1a1a1]"></span></span><span class="flex flex-1 items-center justify-center bg-[linear-gradient(90deg,#4772b3_50%,#545454_50%)] text-[#e8e8e8]">0.500</span></div><span class="ml-[10px] h-[3px] w-[3px] rounded-full bg-[#ddd]"></span></div>
            <div class="mt-[6px] flex h-[19px] items-center"><span class="w-[105px] text-right">IOR</span><div class="ml-[10px] flex h-full w-[148px] overflow-hidden rounded-[4px] bg-[#1d1d1d]"><span class="flex w-[18px] items-center justify-center"><span class="h-[7px] w-[7px] rounded-full bg-[#a1a1a1]"></span></span><span class="flex flex-1 items-center justify-center bg-[#545454] text-[#e0e0e0]">1.500</span></div><span class="ml-[10px] h-[3px] w-[3px] rounded-full bg-[#ddd]"></span></div>
            <div class="mt-[6px] flex h-[19px] items-center"><span class="w-[105px] text-right">Alpha</span><div class="ml-[10px] flex h-full w-[148px] overflow-hidden rounded-[4px] bg-[#1d1d1d]"><span class="flex w-[18px] items-center justify-center"><span class="h-[7px] w-[7px] rounded-full bg-[#a1a1a1]"></span></span><span class="flex flex-1 items-center justify-center bg-[#4772b3] text-[#e8e8e8]">1.000</span></div><span class="ml-[10px] h-[3px] w-[3px] rounded-full bg-[#ddd]"></span></div>
            <div class="mt-[6px] flex h-[19px] items-center"><span class="w-[105px] text-right">Normal</span><div class="ml-[10px] flex h-full w-[148px] items-center rounded-[4px] bg-[#1d1d1d] text-[#ddd]"><span class="ml-[6px] h-[7px] w-[7px] rounded-full bg-[#5f5fd0]"></span><span class="ml-[8px]">Default</span></div></div>
            <div class="mt-[6px] flex h-[20px] items-center pl-[21px]"><svg class="h-[10px] w-[10px] text-[#bbb]"><use href="#chevr"/></svg><span class="ml-[4px]">Diffuse</span></div>
            <div class="flex h-[20px] items-center pl-[21px]"><svg class="h-[10px] w-[10px] text-[#bbb]"><use href="#chevr"/></svg><span class="ml-[4px]">Subsurface</span></div>
            <div class="flex h-[20px] items-center pl-[21px]"><svg class="h-[10px] w-[10px] text-[#bbb]"><use href="#chevr"/></svg><span class="ml-[4px]">Specular</span></div>
            <div class="flex h-[20px] items-center pl-[21px]"><svg class="h-[10px] w-[10px] text-[#bbb]"><use href="#chevr"/></svg><span class="ml-[4px]">Transmission</span></div>
            <div class="flex h-[20px] items-center pl-[21px]"><svg class="h-[10px] w-[10px] text-[#bbb]"><use href="#chevr"/></svg><span class="ml-[4px]">Coat</span></div>
            <div class="flex h-[20px] items-center pl-[21px]"><svg class="h-[10px] w-[10px] text-[#bbb]"><use href="#chevr"/></svg><span class="ml-[4px]">Sheen</span></div>
            <div class="flex h-[20px] items-center pl-[21px]"><svg class="h-[10px] w-[10px] text-[#bbb]"><use href="#chevr"/></svg><span class="ml-[4px]">Emission</span></div>
            <div class="flex h-[20px] items-center pl-[21px]"><svg class="h-[10px] w-[10px] text-[#bbb]"><use href="#chevr"/></svg><span class="ml-[4px]">Thin Film</span></div>
          </div>
          <div class="mt-[3px] flex h-[24px] items-center rounded-[4px] border border-[#2b2b2b] bg-[#3d3d3d] pl-[8px] pt-[1px]"><svg class="h-[10px] w-[10px] text-[#bbb]"><use href="#chevr"/></svg><span class="ml-[3px]">Volume</span><svg class="ml-auto mr-[9px] h-[5px] w-[11px] text-[#777]"><use href="#grip"/></svg></div>
          <div class="mt-[3px] flex h-[24px] items-center rounded-[4px] border border-[#2b2b2b] bg-[#3d3d3d] pl-[8px] pt-[1px]"><svg class="h-[10px] w-[10px] text-[#bbb]"><use href="#chevr"/></svg><span class="ml-[3px]">Displacement</span><svg class="ml-auto mr-[9px] h-[5px] w-[11px] text-[#777]"><use href="#grip"/></svg></div>
          <div class="mt-[3px] flex h-[24px] items-center rounded-[4px] border border-[#2b2b2b] bg-[#3d3d3d] pl-[8px] pt-[1px]"><svg class="h-[10px] w-[10px] text-[#bbb]"><use href="#chevr"/></svg><span class="ml-[3px]">Thickness</span><svg class="ml-auto mr-[9px] h-[5px] w-[11px] text-[#777]"><use href="#grip"/></svg></div>
          <div class="mt-[3px] h-[80px] rounded-t-[4px] border border-[#2b2b2b] bg-[#3d3d3d]">
            <div class="flex h-[24px] items-center pl-[8px] pt-[1px]"><svg class="h-[10px] w-[10px] text-[#bbb]"><use href="#chevd"/></svg><span class="ml-[3px]">Settings</span><svg class="ml-auto mr-[9px] h-[5px] w-[11px] text-[#777]"><use href="#grip"/></svg></div>
            <div class="mt-[8px] flex h-[19px] items-center"><span class="w-[113px] text-right">Pass Index</span><div class="ml-[10px] flex h-full w-[160px] items-center justify-center rounded-[4px] bg-[#545454] text-[#e0e0e0]">0</div></div>
          </div>
        </div>
      </div>
    </section>
  </div>
</div>

<!-- status bar -->
<footer class="flex h-[23px] items-center pt-[2px] text-[#a0a0a0]">
  <svg class="ml-[6px] h-[16px] w-[14px]" viewBox="0 0 14 16"><rect x="1.500" y=".5" width="9" height="15" rx="3.500" fill="none" stroke="#bbb"/><rect x="4.500" y="2" width="3" height="6" fill="#ddd"/><path d="M12 2v4M13.500 2v4" stroke="#999"/></svg>
  <span class="ml-[5px]">Pan</span>
  <svg class="ml-[9px] h-[16px] w-[12px]" viewBox="0 0 12 16"><rect x="1" y=".5" width="9" height="15" rx="3.500" fill="none" stroke="#bbb"/><path d="M5.500 1H4a3 3 0 0 0-3 3v3h4.500z" fill="#ddd"/></svg>
  <span class="ml-[2px]">Options</span>
  <div class="ml-auto mr-[12px] flex items-center">
    <span>Collection</span><span class="mx-[4.500px] h-[14px] w-px bg-[#777]"></span><span>Cube.001</span><span class="mx-[4.500px] h-[14px] w-px bg-[#777]"></span><span>Verts:258</span><span class="mx-[4.500px] h-[14px] w-px bg-[#777]"></span><span>Faces:253</span><span class="mx-[4.500px] h-[14px] w-px bg-[#777]"></span><span>Tris:506</span><span class="mx-[4.500px] h-[14px] w-px bg-[#777]"></span><span>Objects:0/2</span><span class="mx-[4.500px] h-[14px] w-px bg-[#777]"></span>
    <svg class="h-[14px] w-[14px] text-[#888]" viewBox="0 0 16 16"><circle cx="8" cy="8" r="6.500" fill="none" stroke="currentColor"/><ellipse cx="8" cy="8" rx="3" ry="6.500" fill="none" stroke="currentColor"/><path d="M1.500 8h13M2 2l12 12" stroke="currentColor"/></svg>
    <span class="ml-[8px] mr-[4px] h-[14px] w-px bg-[#777]"></span><span>5.1.2</span>
  </div>
</footer>
</body>
</html>
